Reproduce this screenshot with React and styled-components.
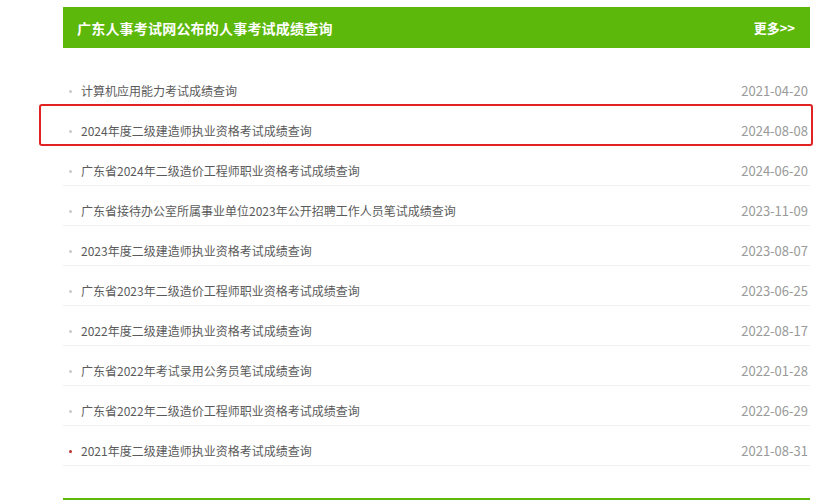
import React from 'react';
import styled, { createGlobalStyle } from 'styled-components';

const GlobalStyle = createGlobalStyle`
  html, body {
    margin: 0;
    padding: 0;
    background: #fff;
  }
  body {
    font-family: "Noto Sans CJK SC", "Noto Sans", sans-serif;
  }
`;

const Page = styled.div`
  width: 816px;
  height: 500px;
  overflow: hidden;
  padding: 7px 0 0 63px;
  box-sizing: border-box;
`;

const Panel = styled.div`
  width: 747px;
`;

const Header = styled.div`
  height: 41px;
  background: #5cb80a;
  display: flex;
  align-items: center;
  justify-content: space-between;
  padding: 0 14px 0 14px;
  color: #fff;
`;

const Title = styled.h2`
  margin: 0;
  font-size: 14px;
  font-weight: bold;
  letter-spacing: 0.2px;
`;

const More = styled.a`
  font-size: 13px;
  font-weight: bold;
  color: #fff;
  text-decoration: none;
  margin-right: 1px;
`;

const List = styled.ul`
  list-style: none;
  margin: 18px 0 0;
  padding: 0;
`;

const Row = styled.li`
  position: relative;
  height: 40px;
  box-sizing: border-box;
  padding: 16px 2px 0 6px;
  display: flex;
  align-items: flex-start;
  border-bottom: 1px solid #f0f0f0;
  font-size: 12px;
  line-height: 18px;
`;

const Dot = styled.span`
  width: 3px;
  height: 3px;
  border-radius: 50%;
  background: ${(p) => (p.$red ? '#c03030' : '#c8c8c8')};
  margin: 8px 9px 0 0;
  flex: none;
`;

const Name = styled.span`
  flex: 1;
  color: #5a5a5a;
`;

const Date = styled.span`
  color: #999;
  font-size: 13px;
`;

const Highlight = styled.div`
  position: absolute;
  left: -24px;
  right: -3px;
  top: -2px;
  bottom: -1px;
  border: 2px solid #e02222;
  border-radius: 3px;
  pointer-events: none;
`;

const BottomBar = styled.div`
  margin-top: 32px;
  height: 6px;
  background: #5cb80a;
`;

const items = [
  { name: '计算机应用能力考试成绩查询', date: '2021-04-20' },
  { name: '2024年度二级建造师执业资格考试成绩查询', date: '2024-08-08', marked: true },
  { name: '广东省2024年二级造价工程师职业资格考试成绩查询', date: '2024-06-20' },
  { name: '广东省接待办公室所属事业单位2023年公开招聘工作人员笔试成绩查询', date: '2023-11-09' },
  { name: '2023年度二级建造师执业资格考试成绩查询', date: '2023-08-07' },
  { name: '广东省2023年二级造价工程师职业资格考试成绩查询', date: '2023-06-25' },
  { name: '2022年度二级建造师执业资格考试成绩查询', date: '2022-08-17' },
  { name: '广东省2022年考试录用公务员笔试成绩查询', date: '2022-01-28' },
  { name: '广东省2022年二级造价工程师职业资格考试成绩查询', date: '2022-06-29' },
  { name: '2021年度二级建造师执业资格考试成绩查询', date: '2021-08-31', red: true },
];

export default function App() {
  return (
    <>
      <GlobalStyle />
      <Page>
        <Panel>
          <Header>
            <Title>广东人事考试网公布的人事考试成绩查询</Title>
            <More href="#">更多&gt;&gt;</More>
          </Header>
          <List>
            {items.map((item) => (
              <Row key={item.name}>
                <Dot $red={item.red} />
                <Name>{item.name}</Name>
                <Date>{item.date}</Date>
                {item.marked && <Highlight />}
              </Row>
            ))}
          </List>
          <BottomBar />
        </Panel>
      </Page>
    </>
  );
}
